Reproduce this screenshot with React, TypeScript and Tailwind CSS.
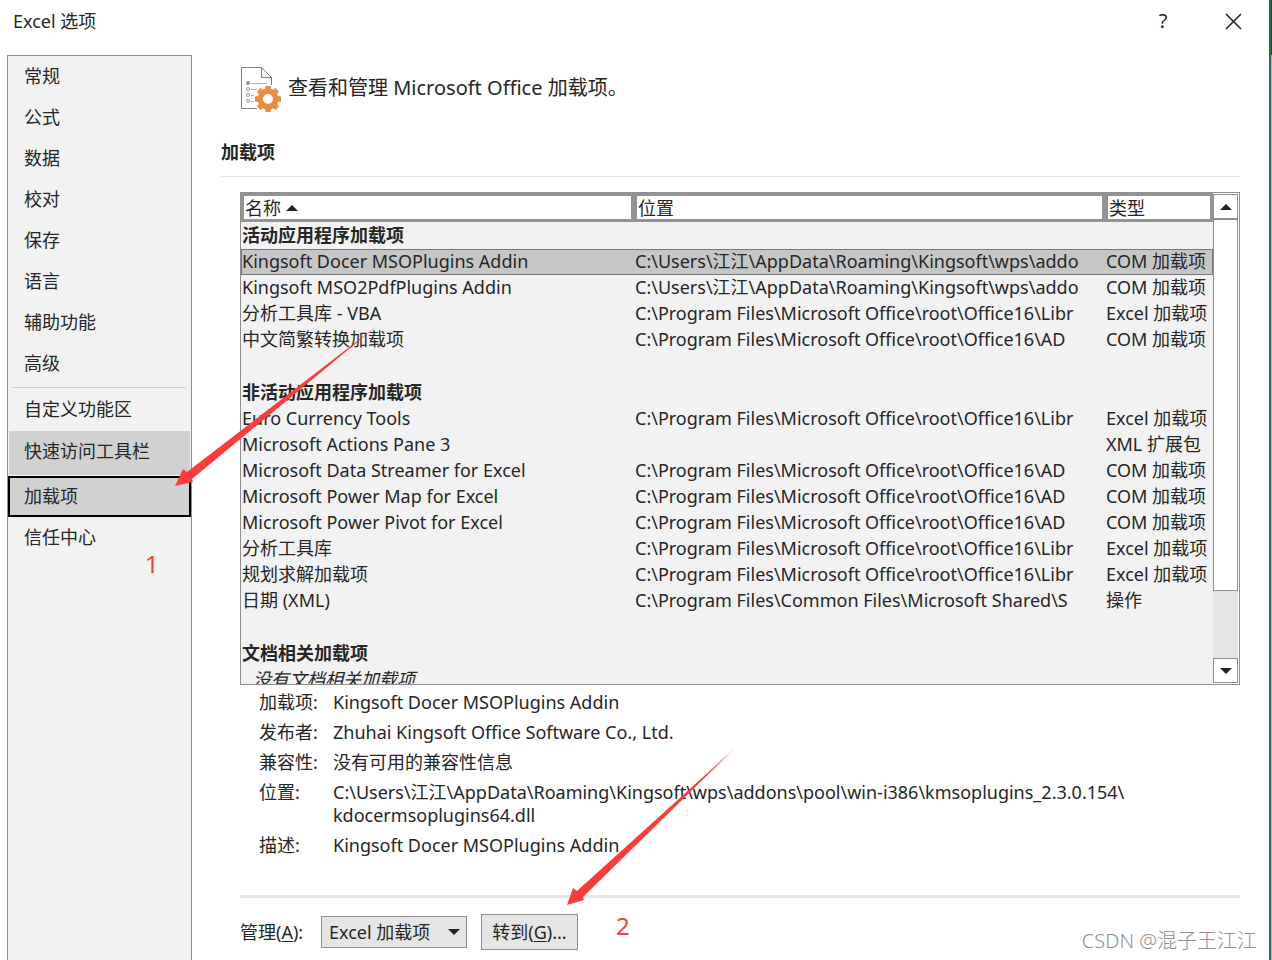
import React from 'react';

type Addin = { name: string; location: string; type: string; selected?: boolean };

const activeAddins: Addin[] = [
  { name: 'Kingsoft Docer MSOPlugins Addin', location: 'C:\\Users\\江江\\AppData\\Roaming\\Kingsoft\\wps\\addo', type: 'COM 加载项', selected: true },
  { name: 'Kingsoft MSO2PdfPlugins Addin', location: 'C:\\Users\\江江\\AppData\\Roaming\\Kingsoft\\wps\\addo', type: 'COM 加载项' },
  { name: '分析工具库 - VBA', location: 'C:\\Program Files\\Microsoft Office\\root\\Office16\\Libr', type: 'Excel 加载项' },
  { name: '中文简繁转换加载项', location: 'C:\\Program Files\\Microsoft Office\\root\\Office16\\AD', type: 'COM 加载项' },
];

const inactiveAddins: Addin[] = [
  { name: 'Euro Currency Tools', location: 'C:\\Program Files\\Microsoft Office\\root\\Office16\\Libr', type: 'Excel 加载项' },
  { name: 'Microsoft Actions Pane 3', location: '', type: 'XML 扩展包' },
  { name: 'Microsoft Data Streamer for Excel', location: 'C:\\Program Files\\Microsoft Office\\root\\Office16\\AD', type: 'COM 加载项' },
  { name: 'Microsoft Power Map for Excel', location: 'C:\\Program Files\\Microsoft Office\\root\\Office16\\AD', type: 'COM 加载项' },
  { name: 'Microsoft Power Pivot for Excel', location: 'C:\\Program Files\\Microsoft Office\\root\\Office16\\AD', type: 'COM 加载项' },
  { name: '分析工具库', location: 'C:\\Program Files\\Microsoft Office\\root\\Office16\\Libr', type: 'Excel 加载项' },
  { name: '规划求解加载项', location: 'C:\\Program Files\\Microsoft Office\\root\\Office16\\Libr', type: 'Excel 加载项' },
  { name: '日期 (XML)', location: 'C:\\Program Files\\Common Files\\Microsoft Shared\\S', type: '操作' },
];

const details = [
  ['加载项:', 'Kingsoft Docer MSOPlugins Addin'],
  ['发布者:', 'Zhuhai Kingsoft Office Software Co., Ltd.'],
  ['兼容性:', '没有可用的兼容性信息'],
  ['位置:', 'C:\\Users\\江江\\AppData\\Roaming\\Kingsoft\\wps\\addons\\pool\\win-i386\\kmsoplugins_2.3.0.154\\\nkdocermsoplugins64.dll'],
  ['描述:', 'Kingsoft Docer MSOPlugins Addin'],
];

const generalPages = ['常规', '公式', '数据', '校对', '保存', '语言', '辅助功能', '高级'];

function Sidebar() {
  const item = 'flex w-full items-center text-left';
  return (
    <nav className="ml-[7px] w-[185px] shrink-0 border border-b-0 border-[#8f8f8f] bg-[#f2f2f2]">
      {generalPages.map((page) => (
        <button key={page} className={`${item} h-[41px] pb-[2px] pl-4`}>{page}</button>
      ))}
      <hr className="mx-[5px] mt-[3px] border-t border-[#d0d0d0]" />
      <button className={`${item} h-[43px] pb-[2px] pl-4`}>自定义功能区</button>
      <div className="px-px pb-px">
        <button className={`${item} h-11 bg-[#d1d1d1] pb-1 pl-[15px]`}>快速访问工具栏</button>
      </div>
      <button className={`${item} h-[41px] border-2 border-black bg-[#d1d1d1] pb-[2px] pl-[14px]`}>加载项</button>
      <button className={`${item} h-[41px] pb-[2px] pl-4`}>信任中心</button>
    </nav>
  );
}

function DocumentGearIcon() {
  return (
    <svg width="42" height="46" viewBox="0 0 42 46" className="shrink-0" aria-hidden="true">
      <path d="M17 41.500H1.500V0.500H21.500L31.500 10.500V18M21.500 0.500V10.500H31.500" fill="none" stroke="#7f7f7f" />
      <circle cx="8" cy="16" r="2" fill="#8f8f8f" />
      <path d="M11 16.500H27M11 22.500H17M11 28.500H14M11 34.500H14" stroke="#b0b0b0" fill="none" />
      <g fill="none" stroke="#9a9a9a">
        <circle cx="8" cy="22" r="1.500" />
        <circle cx="8" cy="28" r="1.500" />
        <circle cx="8" cy="34" r="1.500" />
      </g>
      <g transform="translate(28 32)" fill="#e88c42">
        {[0, 45, 90, 135].map((angle) => (
          <path key={angle} transform={`rotate(${angle})`} d="M-2.500 -13H2.500L3.300 -8H-3.300ZM-2.500 13H2.500L3.300 8H-3.300Z" />
        ))}
        <path fillRule="evenodd" d="M0 -10.500A10.500 10.500 0 1 0 0 10.500A10.500 10.500 0 1 0 0 -10.500ZM0 -5A5 5 0 1 1 0 5A5 5 0 1 1 0 -5Z" />
      </g>
    </svg>
  );
}

function Triangle({ down = false }: { down?: boolean }) {
  return (
    <svg width="12" height="6" viewBox="0 0 12 6" className="shrink-0" aria-hidden="true">
      <path d={down ? 'M0 0H12L6 6Z' : 'M0 6H12L6 0Z'} fill="#222" />
    </svg>
  );
}

function GroupRow({ title }: { title: string }) {
  return (
    <tr className="h-[27px]">
      <th colSpan={3} scope="rowgroup" className="pb-[2px] pl-px text-left font-bold">{title}</th>
    </tr>
  );
}

function AddinRow({ addin }: { addin: Addin }) {
  return (
    <tr className={addin.selected ? 'h-[26px] bg-[#c6c6c6] outline-1 -outline-offset-1 outline-[#777]' : 'h-[26px]'}>
      <td className="overflow-hidden pb-[2px] pl-px">{addin.name}</td>
      <td className="overflow-hidden pb-[2px] pl-px">{addin.location}</td>
      <td className="overflow-hidden pb-[2px] pl-px">{addin.type}</td>
    </tr>
  );
}

function AddinList() {
  return (
    <div className="ml-[19px] flex h-[493px] overflow-hidden border border-[#8f8f8f] bg-[#f2f2f2]">
      <div className="min-w-0 flex-1 overflow-hidden">
        <table className="w-full table-fixed border-collapse whitespace-nowrap leading-6">
          <colgroup>
            <col className="w-[393px]" />
            <col />
            <col className="w-[108px]" />
          </colgroup>
          <thead>
            <tr className="h-[29px] bg-[#939393] text-left">
              <th className="py-[3px] pl-[3px] pr-[3px] font-normal">
                <div className="flex h-[23px] items-center gap-[5px] bg-white pl-px">名称<Triangle /></div>
              </th>
              <th className="py-[3px] pl-[3px] pr-[3px] font-normal">
                <div className="flex h-[23px] items-center bg-white pl-px">位置</div>
              </th>
              <th className="py-[3px] pl-[3px] pr-[3px] font-normal">
                <div className="flex h-[23px] items-center bg-white pl-px">类型</div>
              </th>
            </tr>
          </thead>
          <tbody>
            <GroupRow title="活动应用程序加载项" />
            {activeAddins.map((a) => <AddinRow key={a.name} addin={a} />)}
            <tr className="h-[26px]"><td colSpan={3} /></tr>
            <GroupRow title="非活动应用程序加载项" />
            {inactiveAddins.map((a) => <AddinRow key={a.name} addin={a} />)}
            <tr className="h-[26px]"><td colSpan={3} /></tr>
            <GroupRow title="文档相关加载项" />
            <tr className="h-[26px]"><td colSpan={3} className="pb-[2px] pl-3 italic">没有文档相关加载项</td></tr>
          </tbody>
        </table>
      </div>
      <div className="flex w-[26px] shrink-0 flex-col bg-white py-px pr-px">
        <button aria-label="向上滚动" className="flex h-[25px] items-center justify-center border border-[#8f8f8f] bg-white"><Triangle /></button>
        <div className="flex-1 bg-[#e5e5e5]">
          <div className="h-[372px] border border-[#8f8f8f] bg-white" />
        </div>
        <button aria-label="向下滚动" className="flex h-[25px] items-center justify-center border border-[#8f8f8f] bg-white"><Triangle down /></button>
      </div>
    </div>
  );
}

export default function App() {
  return (
    <div className="relative flex min-h-screen bg-white font-['Noto_Sans','Noto_Sans_CJK_SC',sans-serif] text-[18px] leading-6 text-[#262626]">
      <div className="flex min-w-0 flex-1 flex-col">
        <header className="flex h-[55px] shrink-0 items-start justify-between pl-[13px] pr-[27px] pt-[9px]">
          <h1>Excel 选项</h1>
          <div className="flex items-center gap-[54px]">
            <button aria-label="帮助" className="w-4 text-center text-[20px]">?</button>
            <button aria-label="关闭">
              <svg width="17" height="17" viewBox="0 0 17 17" aria-hidden="true">
                <path d="M1 1L16 16M16 1L1 16" stroke="#222" strokeWidth="1.500" fill="none" />
              </svg>
            </button>
          </div>
        </header>
        <div className="flex flex-1">
          <Sidebar />
          <main className="min-w-0 flex-1 pl-[29px] pr-[29px]">
            <div className="flex items-center gap-[6px] pl-[19px] pt-3">
              <DocumentGearIcon />
              <h2 className="pb-1 text-[20px]">查看和管理 Microsoft Office 加载项。</h2>
            </div>
            <h3 className="mb-[15px] mt-[27px] border-b border-[#e3e3e3] pb-3 font-bold">加载项</h3>
            <AddinList />
            <dl className="ml-[38px] mt-[6px] grid grid-cols-[74px_1fr] gap-y-[7px] leading-[23px]">
              {details.map(([label, value]) => (
                <React.Fragment key={label}>
                  <dt>{label}</dt>
                  <dd className="whitespace-pre-line">{value}</dd>
                </React.Fragment>
              ))}
            </dl>
            <div className="ml-[19px] mt-[38px] flex items-center border-t-[3px] border-[#e5e5e5] pt-4">
              <label htmlFor="manage" className="w-[81px]">管理(<u className="underline-offset-2">A</u>):</label>
              <div className="relative flex w-[146px] items-center">
                <select id="manage" className="h-8 w-full appearance-none border border-[#8f8f8f] bg-[#e5e5e5] pl-[7px]">
                  <option>Excel 加载项</option>
                </select>
                <div className="pointer-events-none absolute right-[7px]"><Triangle down /></div>
              </div>
              <button className="ml-[14px] h-9 w-[97px] border border-[#8f8f8f] bg-[#e5e5e5]">转到(<u className="underline-offset-2">G</u>)...</button>
            </div>
          </main>
        </div>
      </div>
      <div className="flex w-[3px] shrink-0">
        <div className="w-[2px] bg-[#217346]" />
        <div className="flex w-px flex-col">
          <div className="h-[55px] bg-[#0f4a29]" />
          <div className="flex-1 bg-[#b4b4b4]" />
        </div>
      </div>

      <svg width="760" height="920" viewBox="0 0 760 920" className="pointer-events-none absolute left-0 top-0" aria-hidden="true">
        <path d="M175 486L183 469L187 472L378 325L192 479L193 482Z" fill="#fa3c3a" />
        <path d="M567 905L573 888L577 891L734 749L583 897L584 900Z" fill="#fa3c3a" />
      </svg>
      <span className="absolute left-[145px] top-[552px] text-[24px] text-[#fa3c3a]">1</span>
      <span className="absolute left-[616px] top-[914px] text-[24px] text-[#fa3c3a]">2</span>
      <span className="absolute bottom-[7px] right-[15px] text-[20px] font-light text-[#909090]">CSDN @混子王江江</span>
    </div>
  );
}
